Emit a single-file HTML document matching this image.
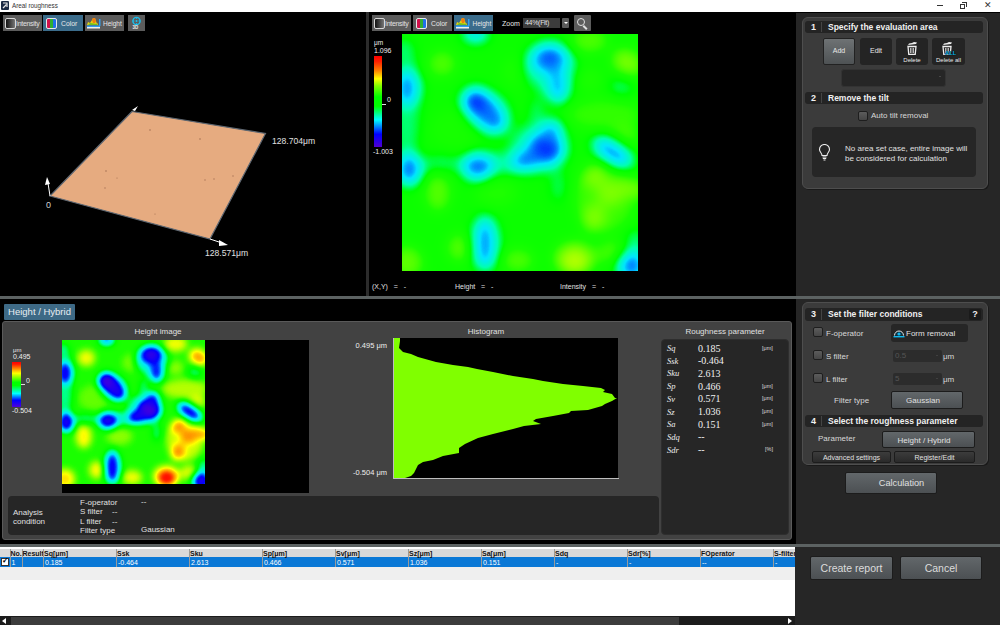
<!DOCTYPE html>
<html><head><meta charset="utf-8">
<style>
*{margin:0;padding:0;box-sizing:border-box}
html,body{width:1000px;height:625px;overflow:hidden;background:#000;font-family:"Liberation Sans",sans-serif;}
.a{position:absolute}
.t{position:absolute;white-space:nowrap;line-height:1}
</style></head><body>
<div class="a" style="left:0;top:0;width:1000px;height:625px;overflow:hidden;background:#000">

<!-- title bar -->
<div class="a" style="left:0;top:0;width:1000px;height:12px;background:#fff"></div>
<svg class="a" style="left:1px;top:1px" width="8" height="9" viewBox="0 0 8 9"><rect x="0" y="0" width="8" height="9" rx="1" fill="#1c2a44"/><path d="M2,2 H6 V6" stroke="#e8e8e8" stroke-width="1.2" fill="none"/><path d="M2,7 L5.5,3.5" stroke="#e8e8e8" stroke-width="1.2"/></svg>
<div class="t" style="left:12px;top:3px;font-size:6.3px;color:#333">Areal roughness</div>
<div class="a" style="left:937px;top:5px;width:6px;height:1px;background:#333"></div>
<div class="a" style="left:960px;top:4px;width:5px;height:5px;border:1px solid #333"></div><div class="a" style="left:962px;top:2px;width:5px;height:5px;border-top:1px solid #333;border-right:1px solid #333"></div>
<div class="t" style="left:984px;top:1px;font-size:9px;color:#333">&#x2715;</div>

<!-- TOP AREA -->
<!--MMAP_S--><svg class="a" style="left:402px;top:34px" width="236" height="237" viewBox="0 0 1000 1000" preserveAspectRatio="none"><defs><filter id="fm" filterUnits="userSpaceOnUse" x="-300" y="-300" width="1600" height="1600" color-interpolation-filters="sRGB"><feGaussianBlur stdDeviation="26"/><feComponentTransfer><feFuncR type="table" tableValues="0 0 0 0 0 0 0 0 0 0 0 0 0 0 0 0 0 0 0 0 0 0 0 0 0 0 0 0 0 0 0 0.0112 0.0245 0.0378 0.0507 0.0589 0.0671 0.0753 0.0835 0.0917 0.0999 0.126 0.153 0.18 0.207 0.234 0.261 0.288 0.314 0.341 0.368 0.395 0.422 0.449 0.475 0.502 0.529 0.556 0.583 0.61 0.637 0.663 0.69 0.717 0.744"/><feFuncG type="table" tableValues="0.072 0.152 0.231 0.311 0.391 0.47 0.55 0.63 0.709 0.789 0.869 0.906 0.917 0.928 0.938 0.949 0.96 0.97 0.981 0.991 1 1 1 1 1 1 1 1 1 1 1 1 1 1 1 1 1 1 1 1 1 1 1 1 1 1 1 1 1 1 1 1 1 1 1 1 1 1 1 1 1 1 1 1 1"/><feFuncB type="table" tableValues="1 1 1 1 1 1 1 1 1 1 1 0.981 0.949 0.917 0.885 0.853 0.821 0.789 0.757 0.726 0.687 0.619 0.551 0.484 0.416 0.349 0.281 0.213 0.146 0.0781 0.0105 0 0 0 0 0 0 0 0 0 0 0 0 0 0 0 0 0 0 0 0 0 0 0 0 0 0 0 0 0 0 0 0 0 0"/></feComponentTransfer></filter></defs><g filter="url(#fm)"><rect x="-300" y="-300" width="1600" height="1600" fill="rgb(135,135,135)"/>
<ellipse cx="170" cy="125" rx="62" ry="58" fill="rgb(189,189,189)"/>
<ellipse cx="795" cy="27" rx="80" ry="55" fill="rgb(189,189,189)"/>
<ellipse cx="955" cy="120" rx="70" ry="55" transform="rotate(30 955 120)" fill="rgb(214,214,214)"/>
<ellipse cx="795" cy="193" rx="55" ry="50" fill="rgb(163,163,163)"/>
<ellipse cx="860" cy="340" rx="160" ry="70" fill="rgb(173,173,173)"/>
<ellipse cx="491" cy="157" rx="70" ry="60" fill="rgb(158,158,158)"/>
<ellipse cx="223" cy="402" rx="110" ry="90" fill="rgb(153,153,153)"/>
<ellipse cx="402" cy="670" rx="90" ry="60" fill="rgb(163,163,163)"/>
<ellipse cx="152" cy="670" rx="55" ry="80" fill="rgb(194,194,194)"/>
<ellipse cx="20" cy="965" rx="70" ry="70" fill="rgb(199,199,199)"/>
<ellipse cx="241" cy="902" rx="50" ry="60" fill="rgb(194,194,194)"/>
<ellipse cx="491" cy="955" rx="70" ry="50" fill="rgb(189,189,189)"/>
<ellipse cx="884" cy="920" rx="60" ry="50" fill="rgb(184,184,184)"/>
<ellipse cx="945" cy="426" rx="60" ry="45" fill="rgb(184,184,184)"/>
<ellipse cx="860" cy="690" rx="130" ry="150" fill="rgb(178,178,178)"/>
<ellipse cx="812" cy="598" rx="55" ry="45" transform="rotate(-30 812 598)" fill="rgb(219,219,219)"/>
<ellipse cx="973" cy="652" rx="70" ry="40" transform="rotate(10 973 652)" fill="rgb(214,214,214)"/>
<ellipse cx="812" cy="777" rx="50" ry="60" transform="rotate(20 812 777)" fill="rgb(219,219,219)"/>
<ellipse cx="884" cy="670" rx="60" ry="55" fill="rgb(219,219,219)"/>
<ellipse cx="732" cy="946" rx="95" ry="75" fill="rgb(199,199,199)"/>
<ellipse cx="732" cy="960" rx="60" ry="55" fill="rgb(250,250,250)"/>
<ellipse cx="625" cy="140" rx="120" ry="110" fill="rgb(87,87,87)"/>
<ellipse cx="362" cy="330" rx="110" ry="90" transform="rotate(40 362 330)" fill="rgb(87,87,87)"/>
<ellipse cx="580" cy="480" rx="130" ry="110" fill="rgb(87,87,87)"/>
<ellipse cx="420" cy="545" rx="120" ry="50" fill="rgb(87,87,87)"/>
<ellipse cx="893" cy="500" rx="110" ry="60" transform="rotate(35 893 500)" fill="rgb(92,92,92)"/>
<ellipse cx="20" cy="300" rx="55" ry="260" fill="rgb(92,92,92)"/>
<ellipse cx="170" cy="545" rx="90" ry="35" fill="rgb(97,97,97)"/>
<ellipse cx="571" cy="342" rx="30" ry="80" fill="rgb(92,92,92)"/>
<ellipse cx="661" cy="640" rx="30" ry="70" fill="rgb(94,94,94)"/>
<ellipse cx="352" cy="880" rx="65" ry="130" fill="rgb(87,87,87)"/>
<ellipse cx="929" cy="223" rx="50" ry="45" fill="rgb(97,97,97)"/>
<ellipse cx="991" cy="884" rx="40" ry="60" fill="rgb(87,87,87)"/>
<ellipse cx="312" cy="0" rx="60" ry="40" fill="rgb(82,82,82)"/>
<ellipse cx="9" cy="62" rx="40" ry="40" fill="rgb(87,87,87)"/>
<ellipse cx="625" cy="107" rx="85" ry="70" fill="rgb(26,26,26)"/>
<ellipse cx="661" cy="225" rx="50" ry="70" fill="rgb(31,31,31)"/>
<ellipse cx="359" cy="329" rx="110" ry="62" transform="rotate(48 359 329)" fill="rgb(20,20,20)"/>
<ellipse cx="312" cy="286" rx="65" ry="65" fill="rgb(13,13,13)"/>
<ellipse cx="607" cy="482" rx="82" ry="75" fill="rgb(10,10,10)"/>
<ellipse cx="634" cy="410" rx="50" ry="50" fill="rgb(26,26,26)"/>
<ellipse cx="527" cy="532" rx="70" ry="50" transform="rotate(-15 527 532)" fill="rgb(20,20,20)"/>
<ellipse cx="321" cy="560" rx="72" ry="62" fill="rgb(20,20,20)"/>
<ellipse cx="893" cy="500" rx="90" ry="45" transform="rotate(35 893 500)" fill="rgb(26,26,26)"/>
<ellipse cx="22" cy="229" rx="58" ry="78" fill="rgb(26,26,26)"/>
<ellipse cx="30" cy="571" rx="58" ry="72" fill="rgb(20,20,20)"/>
<ellipse cx="352" cy="885" rx="48" ry="105" fill="rgb(26,26,26)"/>
<ellipse cx="973" cy="978" rx="65" ry="65" fill="rgb(20,20,20)"/>
<ellipse cx="312" cy="0" rx="50" ry="35" fill="rgb(36,36,36)"/>
<ellipse cx="625" cy="100" rx="30" ry="25" fill="rgb(0,0,0)"/>
<ellipse cx="312" cy="286" rx="28" ry="28" fill="rgb(0,0,0)"/>
<ellipse cx="607" cy="482" rx="32" ry="30" fill="rgb(0,0,0)"/></g></svg><!--MMAP_E-->
<!-- left toolbar -->
<div class="a" style="left:3px;top:15px;width:39px;height:16px;background:#5c5c5c"></div>
<div class="a" style="left:5px;top:18px;width:11px;height:11px;border:1px solid #d8d8d8;border-radius:2px;background:linear-gradient(90deg,#111,#777)"></div>
<div class="t" style="left:16px;top:20px;font-size:7px;color:#e0e0e0;letter-spacing:-0.3px">Intensity</div>
<div class="a" style="left:43px;top:15px;width:40px;height:16px;background:#3b6c8b"></div>
<div class="a" style="left:46px;top:18px;width:11px;height:11px;border:1px solid #e8e8e8;border-radius:2px;background:linear-gradient(90deg,#d0104a 0 33%,#30b030 33% 66%,#2070e8 66%)"></div>
<div class="t" style="left:61px;top:20.5px;font-size:6.8px;color:#e8e8e8">Color</div>
<div class="a" style="left:85px;top:15px;width:39px;height:16px;background:#5c5c5c"></div>
<svg class="a" style="left:87px;top:17px" width="14" height="12" viewBox="0 0 14 12"><path d="M0,8 L1,5 L3,6 L5,3 L6,1 L8,1 L9,4 L10,7 L11,6 L11,8 Z" fill="#e8d010"/><path d="M5,3 L6,1 L8,1 L9,4 L8,6 L6,6Z" fill="#f08010"/><path d="M1,8 L3,6 L10,7 L11,8Z" fill="#70c020"/><rect x="12" y="2" width="1.5" height="7" fill="#30a0f0"/><rect x="0" y="8.5" width="13" height="1.5" fill="#30a0f0"/><rect x="0" y="10" width="13" height="1.5" fill="#f0f0f0"/></svg>
<div class="t" style="left:103px;top:20.5px;font-size:6.5px;color:#e8e8e8">Height</div>
<div class="a" style="left:128px;top:15px;width:17px;height:16px;background:#5c5c5c"></div>
<svg class="a" style="left:131px;top:16px" width="11" height="15" viewBox="0 0 11 15"><circle cx="5.5" cy="5" r="3.6" fill="none" stroke="#18c0f0" stroke-width="1.4"/><circle cx="5.5" cy="5" r="1" fill="#18c0f0"/><path d="M5.5,1 V3 M5.5,7 V9 M1.5,5 H3.5 M7.5,5 H9.5" stroke="#18c0f0" stroke-width="0.8"/></svg>
<div class="t" style="left:132.5px;top:25.5px;font-size:4.5px;font-weight:bold;color:#eee">3D</div>

<!-- 3D plane -->
<svg class="a" style="left:0;top:12px" width="366" height="284" viewBox="0 12 366 284">
<polygon points="132,111.5 265.5,133.5 210,239 50,196" fill="#e6ab80" stroke="#5f6872" stroke-width="1.2"/>
<g fill="#8a5a40" opacity="0.7"><circle cx="150" cy="130" r="0.8"/><circle cx="200" cy="139" r="0.8"/><circle cx="106" cy="171" r="0.8"/><circle cx="117" cy="178" r="0.6"/><circle cx="233" cy="176" r="0.7"/><circle cx="205" cy="180" r="0.7"/><circle cx="214" cy="179" r="0.7"/><circle cx="105" cy="188" r="0.7"/><circle cx="155" cy="214" r="0.6"/></g>
<path d="M50,196 L48,183" stroke="#fff" stroke-width="1"/><polygon points="45,185 47,177 50,184" fill="#fff"/>
<path d="M210,239 L222,243" stroke="#fff" stroke-width="1"/><polygon points="219,240 228,245 219,246" fill="#fff"/>
<polygon points="132,110 138,106 135,111" fill="#fff"/>
</svg>
<div class="t" style="left:272px;top:137px;font-size:8.6px;color:#e0e0e0">128.704μm</div>
<div class="t" style="left:46px;top:201px;font-size:9px;color:#d0d0d0">0</div>
<div class="t" style="left:205px;top:248.5px;font-size:8.6px;color:#e0e0e0">128.571μm</div>

<!-- middle toolbar -->
<div class="a" style="left:372px;top:15px;width:39px;height:16px;background:#5c5c5c"></div>
<div class="a" style="left:374px;top:18px;width:11px;height:11px;border:1px solid #d8d8d8;border-radius:2px;background:linear-gradient(90deg,#111,#777)"></div>
<div class="t" style="left:385px;top:20px;font-size:7px;color:#e0e0e0;letter-spacing:-0.3px">Intensity</div>
<div class="a" style="left:413px;top:15px;width:39px;height:16px;background:#5c5c5c"></div>
<div class="a" style="left:416px;top:18px;width:11px;height:11px;border:1px solid #e8e8e8;border-radius:2px;background:linear-gradient(90deg,#d0104a 0 33%,#30b030 33% 66%,#2070e8 66%)"></div>
<div class="t" style="left:431px;top:20.5px;font-size:6.8px;color:#e8e8e8">Color</div>
<div class="a" style="left:454px;top:15px;width:39px;height:16px;background:#3b6c8b"></div>
<svg class="a" style="left:456px;top:17px" width="14" height="12" viewBox="0 0 14 12"><path d="M0,8 L1,5 L3,6 L5,3 L6,1 L8,1 L9,4 L10,7 L11,6 L11,8 Z" fill="#e8d010"/><path d="M5,3 L6,1 L8,1 L9,4 L8,6 L6,6Z" fill="#f08010"/><path d="M1,8 L3,6 L10,7 L11,8Z" fill="#70c020"/><rect x="12" y="2" width="1.5" height="7" fill="#30a0f0"/><rect x="0" y="8.5" width="13" height="1.5" fill="#30a0f0"/><rect x="0" y="10" width="13" height="1.5" fill="#f0f0f0"/></svg>
<div class="t" style="left:472.5px;top:20.5px;font-size:6.5px;color:#e8e8e8">Height</div>
<div class="t" style="left:502px;top:19.5px;font-size:7px;color:#e8e8e8">Zoom</div>
<div class="a" style="left:523px;top:18px;width:37px;height:10px;background:#3c3c3c"></div>
<div class="t" style="left:525px;top:19px;font-size:7px;color:#e0e0e0;letter-spacing:-0.3px">44%(Fit)</div>
<div class="a" style="left:562px;top:18px;width:7px;height:10px;background:#5a5a5a;border-radius:1px"></div>
<div class="a" style="left:563.5px;top:22px;width:0;height:0;border-left:2px solid transparent;border-right:2px solid transparent;border-top:2.5px solid #fff"></div>
<div class="a" style="left:574px;top:15px;width:17px;height:16px;background:#5c5c5c;border-radius:1px"></div>
<div class="a" style="left:577px;top:18px;width:8px;height:8px;border:1.5px solid #e0e0e0;border-radius:50%"></div>
<div class="a" style="left:584px;top:25px;width:5px;height:1.6px;background:#e0e0e0;transform:rotate(45deg);transform-origin:0 0"></div>
<!-- middle colorbar -->
<div class="t" style="left:374px;top:40px;font-size:6.5px;color:#eee">μm</div>
<div class="t" style="left:374px;top:47px;font-size:7px;color:#eee">1.096</div>
<div class="a" style="left:374px;top:56px;width:8px;height:91px;background:linear-gradient(#ff0000 0%,#ff2000 6%,#ff8000 16%,#ffff00 25%,#80ff00 33%,#00ff00 45%,#00ff00 55%,#00ffff 70%,#0080ff 78%,#0000ff 86%,#5000d0 100%)"></div>
<div class="a" style="left:382px;top:104px;width:4px;height:1px;background:#ddd"></div>
<div class="t" style="left:387px;top:96px;font-size:7px;color:#eee">0</div>
<div class="t" style="left:373px;top:148px;font-size:7px;color:#eee">-1.003</div>
<!-- status -->
<div class="t" style="left:372px;top:282.8px;font-size:7px;color:#e0e0e0;word-spacing:1px">(X,Y)&nbsp; = &nbsp;-</div>
<div class="t" style="left:455px;top:282.8px;font-size:7px;color:#e0e0e0;word-spacing:1px">Height&nbsp; = &nbsp;-</div>
<div class="t" style="left:560px;top:282.8px;font-size:7px;color:#e0e0e0;word-spacing:1px">Intensity&nbsp; = &nbsp;-</div>
<!-- BOTTOM AREA -->
<div class="a" style="left:4px;top:304px;width:71px;height:16px;background:#3e6a86;border-radius:1px"></div>
<div class="t" style="left:4px;top:307px;width:71px;text-align:center;font-size:9.5px;color:#e8eef2">Height / Hybrid</div>
<div class="a" style="left:2px;top:321px;width:790px;height:219px;background:#424242;border:1px solid #5a5a5a;border-radius:3px"></div>
<div class="t" style="left:108px;top:328px;width:100px;text-align:center;font-size:8px;color:#e0e0e0">Height image</div>
<div class="t" style="left:436px;top:328px;width:100px;text-align:center;font-size:8px;color:#e0e0e0">Histogram</div>
<div class="t" style="left:665px;top:328px;width:120px;text-align:center;font-size:8px;color:#e0e0e0">Roughness parameter</div>
<!-- bottom colorbar -->
<div class="t" style="left:13px;top:347px;font-size:6px;color:#eee">μm</div>
<div class="t" style="left:13px;top:353px;font-size:7px;color:#eee">0.495</div>
<div class="a" style="left:12px;top:362px;width:9px;height:45px;background:linear-gradient(#ff0000 0%,#ff1a00 5%,#ff8c00 15%,#ffff00 25%,#00ff00 45%,#00ff00 52%,#00ffff 70%,#0000ff 85%,#4d00d9 100%)"></div>
<div class="a" style="left:21px;top:384px;width:4px;height:1px;background:#ddd"></div>
<div class="t" style="left:26px;top:377px;font-size:7px;color:#eee">0</div>
<div class="t" style="left:12px;top:407px;font-size:7px;color:#eee">-0.504</div>
<!-- height image black box -->
<div class="a" style="left:62px;top:340px;width:247px;height:153px;background:#000"></div>
<!--HMAP_S--><svg class="a" style="left:62px;top:340px" width="143" height="144" viewBox="0 0 1000 1000" preserveAspectRatio="none"><defs><filter id="fb" filterUnits="userSpaceOnUse" x="-300" y="-300" width="1600" height="1600" color-interpolation-filters="sRGB"><feGaussianBlur stdDeviation="26"/><feComponentTransfer><feFuncR type="table" tableValues="0.3 0.261 0.222 0.183 0.144 0.105 0.0656 0.0266 0 0 0 0 0 0 0 0 0 0 0 0 0 0 0 0 0 0 0 0 0 0.00391 0.0234 0.043 0.0625 0.082 0.105 0.169 0.233 0.297 0.361 0.425 0.489 0.553 0.616 0.68 0.744 0.808 0.872 0.936 1 1 1 1 1 1 1 1 1 1 1 1 1 1 1 1 1"/><feFuncG type="table" tableValues="0 0 0 0 0 0 0 0 0.0375 0.155 0.272 0.389 0.506 0.623 0.741 0.858 0.91 0.926 0.941 0.957 0.973 0.988 1 1 1 1 1 1 1 1 1 1 1 1 1 1 1 1 1 1 1 1 1 1 1 1 1 1 1 0.936 0.872 0.808 0.744 0.68 0.616 0.553 0.475 0.397 0.319 0.241 0.162 0.0937 0.0625 0.0312 0"/><feFuncB type="table" tableValues="0.85 0.87 0.889 0.909 0.928 0.948 0.967 0.987 1 1 1 1 1 1 1 1 0.97 0.923 0.876 0.829 0.782 0.736 0.676 0.577 0.477 0.378 0.278 0.179 0.0795 0 0 0 0 0 0 0 0 0 0 0 0 0 0 0 0 0 0 0 0 0 0 0 0 0 0 0 0 0 0 0 0 0 0 0 0"/></feComponentTransfer></filter></defs><g filter="url(#fb)"><rect x="-300" y="-300" width="1600" height="1600" fill="rgb(135,135,135)"/>
<ellipse cx="170" cy="125" rx="62" ry="58" fill="rgb(189,189,189)"/>
<ellipse cx="795" cy="27" rx="80" ry="55" fill="rgb(189,189,189)"/>
<ellipse cx="955" cy="120" rx="70" ry="55" transform="rotate(30 955 120)" fill="rgb(214,214,214)"/>
<ellipse cx="795" cy="193" rx="55" ry="50" fill="rgb(163,163,163)"/>
<ellipse cx="860" cy="340" rx="160" ry="70" fill="rgb(173,173,173)"/>
<ellipse cx="491" cy="157" rx="70" ry="60" fill="rgb(158,158,158)"/>
<ellipse cx="223" cy="402" rx="110" ry="90" fill="rgb(153,153,153)"/>
<ellipse cx="402" cy="670" rx="90" ry="60" fill="rgb(163,163,163)"/>
<ellipse cx="152" cy="670" rx="55" ry="80" fill="rgb(194,194,194)"/>
<ellipse cx="20" cy="965" rx="70" ry="70" fill="rgb(199,199,199)"/>
<ellipse cx="241" cy="902" rx="50" ry="60" fill="rgb(194,194,194)"/>
<ellipse cx="491" cy="955" rx="70" ry="50" fill="rgb(189,189,189)"/>
<ellipse cx="884" cy="920" rx="60" ry="50" fill="rgb(184,184,184)"/>
<ellipse cx="945" cy="426" rx="60" ry="45" fill="rgb(184,184,184)"/>
<ellipse cx="860" cy="690" rx="130" ry="150" fill="rgb(178,178,178)"/>
<ellipse cx="812" cy="598" rx="55" ry="45" transform="rotate(-30 812 598)" fill="rgb(219,219,219)"/>
<ellipse cx="973" cy="652" rx="70" ry="40" transform="rotate(10 973 652)" fill="rgb(214,214,214)"/>
<ellipse cx="812" cy="777" rx="50" ry="60" transform="rotate(20 812 777)" fill="rgb(219,219,219)"/>
<ellipse cx="884" cy="670" rx="60" ry="55" fill="rgb(219,219,219)"/>
<ellipse cx="732" cy="946" rx="95" ry="75" fill="rgb(199,199,199)"/>
<ellipse cx="732" cy="960" rx="60" ry="55" fill="rgb(250,250,250)"/>
<ellipse cx="625" cy="140" rx="120" ry="110" fill="rgb(87,87,87)"/>
<ellipse cx="362" cy="330" rx="110" ry="90" transform="rotate(40 362 330)" fill="rgb(87,87,87)"/>
<ellipse cx="580" cy="480" rx="130" ry="110" fill="rgb(87,87,87)"/>
<ellipse cx="420" cy="545" rx="120" ry="50" fill="rgb(87,87,87)"/>
<ellipse cx="893" cy="500" rx="110" ry="60" transform="rotate(35 893 500)" fill="rgb(92,92,92)"/>
<ellipse cx="20" cy="300" rx="55" ry="260" fill="rgb(92,92,92)"/>
<ellipse cx="170" cy="545" rx="90" ry="35" fill="rgb(97,97,97)"/>
<ellipse cx="571" cy="342" rx="30" ry="80" fill="rgb(92,92,92)"/>
<ellipse cx="661" cy="640" rx="30" ry="70" fill="rgb(94,94,94)"/>
<ellipse cx="352" cy="880" rx="65" ry="130" fill="rgb(87,87,87)"/>
<ellipse cx="929" cy="223" rx="50" ry="45" fill="rgb(97,97,97)"/>
<ellipse cx="991" cy="884" rx="40" ry="60" fill="rgb(87,87,87)"/>
<ellipse cx="312" cy="0" rx="60" ry="40" fill="rgb(82,82,82)"/>
<ellipse cx="9" cy="62" rx="40" ry="40" fill="rgb(87,87,87)"/>
<ellipse cx="625" cy="107" rx="85" ry="70" fill="rgb(26,26,26)"/>
<ellipse cx="661" cy="225" rx="50" ry="70" fill="rgb(31,31,31)"/>
<ellipse cx="359" cy="329" rx="110" ry="62" transform="rotate(48 359 329)" fill="rgb(20,20,20)"/>
<ellipse cx="312" cy="286" rx="65" ry="65" fill="rgb(13,13,13)"/>
<ellipse cx="607" cy="482" rx="82" ry="75" fill="rgb(10,10,10)"/>
<ellipse cx="634" cy="410" rx="50" ry="50" fill="rgb(26,26,26)"/>
<ellipse cx="527" cy="532" rx="70" ry="50" transform="rotate(-15 527 532)" fill="rgb(20,20,20)"/>
<ellipse cx="321" cy="560" rx="72" ry="62" fill="rgb(20,20,20)"/>
<ellipse cx="893" cy="500" rx="90" ry="45" transform="rotate(35 893 500)" fill="rgb(26,26,26)"/>
<ellipse cx="22" cy="229" rx="58" ry="78" fill="rgb(26,26,26)"/>
<ellipse cx="30" cy="571" rx="58" ry="72" fill="rgb(20,20,20)"/>
<ellipse cx="352" cy="885" rx="48" ry="105" fill="rgb(26,26,26)"/>
<ellipse cx="973" cy="978" rx="65" ry="65" fill="rgb(20,20,20)"/>
<ellipse cx="312" cy="0" rx="50" ry="35" fill="rgb(36,36,36)"/>
<ellipse cx="625" cy="100" rx="30" ry="25" fill="rgb(0,0,0)"/>
<ellipse cx="312" cy="286" rx="28" ry="28" fill="rgb(0,0,0)"/>
<ellipse cx="607" cy="482" rx="32" ry="30" fill="rgb(0,0,0)"/></g></svg><!--HMAP_E-->
<!-- histogram -->
<div class="t" style="left:330px;top:342px;width:57px;text-align:right;font-size:7.5px;color:#eee">0.495 μm</div>
<div class="t" style="left:330px;top:469px;width:57px;text-align:right;font-size:7.5px;color:#eee">-0.504 μm</div>
<div class="a" style="left:393px;top:338px;width:225px;height:141px;background:#000"></div>
<svg class="a" style="left:393px;top:338px" width="226" height="141" viewBox="0 0 226 141">
<polygon fill="#80ff00" points="0,0 7,0 7,3 6,10 10,14 18,16 25,19 43,24 60,27 75,29 84,31 100,34 120,38 140,41 150,43 170,46 190,48 208,50 212,52 210,54 219,56 222,60 224,60 219,63 212,66 209,68 195,72 178,73 176,75 160,78 143,81 140,83 148,86 131,88 120,91 100,96 85,100 72,106 66,110 66,115 50,118 40,122 30,124 25,127 21,135 18,138 12,140 0,141"/>
<rect x="0" y="0" width="1" height="141" fill="#bdbdbd"/>
<rect x="0" y="140" width="226" height="1" fill="#bdbdbd"/>
</svg>
<!-- roughness params -->
<div class="a" style="left:661px;top:339px;width:128px;height:196px;background:#262626;border:1px solid #2e2e2e;border-radius:4px"></div>
<!--RP_S--><div class="t" style="left:667px;top:344.0px;font-family:'Liberation Serif',serif;font-style:italic;font-size:8.5px;color:#eee">Sq</div>
<div class="t" style="left:698px;top:343.5px;font-family:'Liberation Serif',serif;font-size:10px;color:#f0f0f0">0.185</div>
<div class="t" style="left:762px;top:345.5px;font-size:5.5px;color:#ddd">[μm]</div>
<div class="t" style="left:667px;top:356.7px;font-family:'Liberation Serif',serif;font-style:italic;font-size:8.5px;color:#eee">Ssk</div>
<div class="t" style="left:698px;top:356.2px;font-family:'Liberation Serif',serif;font-size:10px;color:#f0f0f0">-0.464</div>
<div class="t" style="left:667px;top:369.4px;font-family:'Liberation Serif',serif;font-style:italic;font-size:8.5px;color:#eee">Sku</div>
<div class="t" style="left:698px;top:368.9px;font-family:'Liberation Serif',serif;font-size:10px;color:#f0f0f0">2.613</div>
<div class="t" style="left:667px;top:382.1px;font-family:'Liberation Serif',serif;font-style:italic;font-size:8.5px;color:#eee">Sp</div>
<div class="t" style="left:698px;top:381.6px;font-family:'Liberation Serif',serif;font-size:10px;color:#f0f0f0">0.466</div>
<div class="t" style="left:762px;top:383.6px;font-size:5.5px;color:#ddd">[μm]</div>
<div class="t" style="left:667px;top:394.8px;font-family:'Liberation Serif',serif;font-style:italic;font-size:8.5px;color:#eee">Sv</div>
<div class="t" style="left:698px;top:394.3px;font-family:'Liberation Serif',serif;font-size:10px;color:#f0f0f0">0.571</div>
<div class="t" style="left:762px;top:396.3px;font-size:5.5px;color:#ddd">[μm]</div>
<div class="t" style="left:667px;top:407.5px;font-family:'Liberation Serif',serif;font-style:italic;font-size:8.5px;color:#eee">Sz</div>
<div class="t" style="left:698px;top:407.0px;font-family:'Liberation Serif',serif;font-size:10px;color:#f0f0f0">1.036</div>
<div class="t" style="left:762px;top:409.0px;font-size:5.5px;color:#ddd">[μm]</div>
<div class="t" style="left:667px;top:420.2px;font-family:'Liberation Serif',serif;font-style:italic;font-size:8.5px;color:#eee">Sa</div>
<div class="t" style="left:698px;top:419.7px;font-family:'Liberation Serif',serif;font-size:10px;color:#f0f0f0">0.151</div>
<div class="t" style="left:762px;top:421.7px;font-size:5.5px;color:#ddd">[μm]</div>
<div class="t" style="left:667px;top:432.9px;font-family:'Liberation Serif',serif;font-style:italic;font-size:8.5px;color:#eee">Sdq</div>
<div class="t" style="left:698px;top:432.4px;font-family:'Liberation Serif',serif;font-size:10px;color:#f0f0f0">--</div>
<div class="t" style="left:667px;top:445.6px;font-family:'Liberation Serif',serif;font-style:italic;font-size:8.5px;color:#eee">Sdr</div>
<div class="t" style="left:698px;top:445.1px;font-family:'Liberation Serif',serif;font-size:10px;color:#f0f0f0">--</div>
<div class="t" style="left:765px;top:447.1px;font-size:5.5px;color:#ddd">[%]</div><!--RP_E-->
<!-- analysis condition -->
<div class="a" style="left:8px;top:496px;width:651px;height:39px;background:#262626;border-radius:4px"></div>
<div class="t" style="left:13px;top:507.5px;font-size:8px;color:#e0e0e0;line-height:9.4px">Analysis<br>condition</div>
<div class="t" style="left:80px;top:498px;font-size:8px;color:#e0e0e0;line-height:9.4px">F-operator<br>S filter<br>L filter<br>Filter type</div>
<div class="t" style="left:141px;top:498px;font-size:8px;color:#e0e0e0">--</div>
<div class="t" style="left:112px;top:507.4px;font-size:8px;color:#e0e0e0;line-height:9.4px">--<br>--</div>
<div class="t" style="left:141px;top:526.2px;font-size:8px;color:#e0e0e0">Gaussian</div>
<!-- RIGHT PANEL -->
<div class="a" style="left:796px;top:13px;width:204px;height:284px;background:#262626"></div>
<div class="a" style="left:796px;top:299px;width:204px;height:245px;background:#262626"></div>
<!-- separators -->
<div class="a" style="left:0;top:296px;width:1000px;height:3px;background:#5c6262"></div>
<div class="a" style="left:0;top:544px;width:1000px;height:3px;background:#5c6262"></div>
<div class="a" style="left:366px;top:12px;width:3px;height:284px;background:#2c2c2c"></div>

<!-- card 1 -->
<div class="a" style="left:802px;top:17px;width:186px;height:172px;background:#3b3b3b;border:1px solid #4e4e4e;border-radius:6px;box-shadow:1px 1px 0 #1a1a1a"></div>
<div class="a" style="left:805px;top:21px;width:178px;height:12px;background:#242424;border-radius:3px"></div>
<div class="t" style="left:811px;top:23px;font-size:9px;font-weight:bold;color:#f0f0f0">1</div>
<div class="a" style="left:821px;top:22px;width:1px;height:10px;background:#444"></div>
<div class="t" style="left:828px;top:23px;font-size:8.5px;font-weight:bold;color:#f0f0f0">Specify the evaluation area</div>
<div class="a" style="left:823px;top:38px;width:32px;height:27px;background:linear-gradient(#6e7274,#4e5254);border:1px solid #222;border-radius:2px"></div>
<div class="t" style="left:823px;top:47px;width:32px;text-align:center;font-size:7px;color:#e8e8e8">Add</div>
<div class="a" style="left:860px;top:38px;width:32px;height:27px;background:#242424;border-radius:3px"></div>
<div class="t" style="left:860px;top:47px;width:32px;text-align:center;font-size:7px;color:#e8e8e8">Edit</div>
<div class="a" style="left:896px;top:38px;width:32px;height:27px;background:#242424;border-radius:3px"></div>
<div class="t" style="left:896px;top:56.5px;width:32px;text-align:center;font-size:6px;color:#e8e8e8">Delete</div>
<svg class="a" style="left:906px;top:41px" width="13" height="14" viewBox="0 0 13 14"><path d="M1.5,5 L2,4 L10,3 L11,1.5 L8,1 L6,2 L3,2.5Z" fill="#eee"/><path d="M2,5.5 L10,5.5 L9.2,13.5 L2.8,13.5Z" fill="none" stroke="#eee" stroke-width="1.3"/><path d="M4.5,7 V12 M6,7 V12 M7.5,7 V12" stroke="#ddd" stroke-width="0.8"/></svg>
<div class="a" style="left:932px;top:38px;width:33px;height:27px;background:#242424;border-radius:3px"></div>
<div class="t" style="left:932px;top:56.5px;width:33px;text-align:center;font-size:6px;color:#e8e8e8">Delete all</div>
<svg class="a" style="left:941px;top:41px" width="13" height="14" viewBox="0 0 13 14"><path d="M1.5,5 L2,4 L10,3 L11,1.5 L8,1 L6,2 L3,2.5Z" fill="#eee"/><path d="M2,5.5 L10,5.5 L9.2,13.5 L2.8,13.5Z" fill="none" stroke="#eee" stroke-width="1.3"/><path d="M4.5,7 V12 M6,7 V12 M7.5,7 V12" stroke="#ddd" stroke-width="0.8"/></svg>
<div class="t" style="left:945px;top:50.5px;font-size:5.8px;font-weight:bold;color:#10b8f0;text-shadow:0 0 1px #000,0 0 1px #000">ALL</div>
<div class="a" style="left:841px;top:69px;width:105px;height:18px;background:#262626;border-radius:3px;border:1px solid #333"></div>
<div class="a" style="left:805px;top:92px;width:178px;height:12px;background:#242424;border-radius:3px"></div>
<div class="t" style="left:811px;top:94px;font-size:9px;font-weight:bold;color:#f0f0f0">2</div>
<div class="a" style="left:821px;top:93px;width:1px;height:10px;background:#444"></div>
<div class="t" style="left:828px;top:94px;font-size:8.5px;font-weight:bold;color:#f0f0f0">Remove the tilt</div>
<div class="a" style="left:858px;top:111px;width:10px;height:10px;background:linear-gradient(#5c5c5c,#464646);border:1px solid #1e1e1e;border-radius:2px"></div>
<div class="t" style="left:871px;top:112px;font-size:8px;color:#d8d8d8">Auto tilt removal</div>
<div class="a" style="left:812px;top:127px;width:164px;height:50px;background:#262626;border-radius:4px"></div>
<div class="t" style="left:845px;top:144px;font-size:8px;color:#e0e0e0;line-height:10px">No area set case, entire image will<br>be considered for calculation</div>


<div class="a" style="left:957px;top:399px;width:0;height:0;border-left:2px solid transparent;border-right:2px solid transparent;border-top:2px solid #fff"></div>
<div class="a" style="left:969px;top:438px;width:0;height:0;border-left:2px solid transparent;border-right:2px solid transparent;border-top:2px solid #fff"></div>
<div class="a" style="left:939px;top:76px;width:0;height:0;border-left:1.5px solid transparent;border-right:1.5px solid transparent;border-top:1.5px solid #666"></div>
<svg class="a" style="left:848px;top:474px" width="16" height="17" viewBox="0 0 16 17"><path d="M6,1.5 H15" stroke="#e0e0e0" stroke-width="1.2"/><path d="M6,1.5 V9" stroke="#e0e0e0" stroke-width="1.2"/><path d="M1.5,5.5 H4 M8,5.5 H12.5 V15 L10.5,13.5 L8.5,15 L6.5,13.5 L4.5,15 L1.5,13.5 Z" fill="none" stroke="#10b8f0" stroke-width="1.4"/></svg>
<svg class="a" style="left:818px;top:144px" width="13" height="17" viewBox="0 0 13 17"><path d="M4,11.5 C4,9 1.5,8 1.5,5.5 A5,5 0 0 1 11.5,5.5 C11.5,8 9,9 9,11.5 Z" fill="none" stroke="#eee" stroke-width="1.1"/><path d="M4.5,13 H8.5 M4.8,14.5 H8.2 M5.5,16 H7.5" stroke="#eee" stroke-width="1"/></svg>
<!-- card 2 -->
<div class="a" style="left:802px;top:302px;width:186px;height:163px;background:#3b3b3b;border:1px solid #4e4e4e;border-radius:6px;box-shadow:1px 1px 0 #1a1a1a"></div>
<div class="a" style="left:805px;top:308px;width:178px;height:13px;background:#242424;border-radius:3px"></div>
<div class="t" style="left:811px;top:310px;font-size:9px;font-weight:bold;color:#f0f0f0">3</div>
<div class="a" style="left:821px;top:309px;width:1px;height:11px;background:#444"></div>
<div class="t" style="left:828px;top:310px;font-size:8.5px;font-weight:bold;color:#f0f0f0">Set the filter conditions</div>
<div class="a" style="left:969px;top:309px;width:12px;height:11px;background:#1a1a1a;border-radius:2px"></div>
<div class="t" style="left:969px;top:310px;width:12px;text-align:center;font-size:9px;font-weight:bold;color:#f0f0f0">?</div>
<div class="a" style="left:813px;top:327px;width:10px;height:10px;background:linear-gradient(#5c5c5c,#464646);border:1px solid #1e1e1e;border-radius:2px"></div>
<div class="t" style="left:826px;top:329.5px;font-size:8px;color:#d8d8d8">F-operator</div>
<div class="a" style="left:891px;top:324px;width:77px;height:18px;background:#262626;border-radius:3px"></div>
<div class="t" style="left:906px;top:329.5px;font-size:8px;color:#e0e0e0">Form removal</div>
<svg class="a" style="left:893px;top:328px" width="12" height="10" viewBox="0 0 12 10"><path d="M1.5,7.5 A4.5,4.5 0 0 1 10.5,7.5" fill="#0a3040" stroke="#e8e8e8" stroke-width="1"/><circle cx="6" cy="6" r="1.6" fill="#10b8f0"/><rect x="0.5" y="8" width="11" height="1.4" fill="#10b8f0"/></svg>
<div class="a" style="left:813px;top:350px;width:10px;height:10px;background:linear-gradient(#5c5c5c,#464646);border:1px solid #1e1e1e;border-radius:2px"></div>
<div class="t" style="left:826px;top:353px;font-size:8px;color:#d8d8d8">S filter</div>
<div class="a" style="left:893px;top:350px;width:49px;height:12px;background:#2c2c2c;border-radius:2px"></div>
<div class="t" style="left:895px;top:352px;font-size:8px;color:#555">0.5</div>
<div class="t" style="left:943px;top:353px;font-size:8px;color:#d8d8d8">μm</div>
<div class="a" style="left:813px;top:373px;width:10px;height:10px;background:linear-gradient(#5c5c5c,#464646);border:1px solid #1e1e1e;border-radius:2px"></div>
<div class="t" style="left:826px;top:376px;font-size:8px;color:#d8d8d8">L filter</div>
<div class="a" style="left:893px;top:373px;width:49px;height:12px;background:#2c2c2c;border-radius:2px"></div>
<div class="t" style="left:895px;top:375px;font-size:8px;color:#555">5</div>
<div class="t" style="left:943px;top:376px;font-size:8px;color:#d8d8d8">μm</div>

<div class="a" style="left:936px;top:355px;width:0;height:0;border-left:1.5px solid transparent;border-right:1.5px solid transparent;border-top:1.5px solid #555"></div>
<div class="a" style="left:936px;top:378px;width:0;height:0;border-left:1.5px solid transparent;border-right:1.5px solid transparent;border-top:1.5px solid #555"></div>
<div class="t" style="left:834px;top:397px;font-size:8px;color:#d8d8d8">Filter type</div>
<div class="a" style="left:891px;top:391px;width:72px;height:18px;background:linear-gradient(#62676a,#4c5053);border:1px solid #1c1c1c;border-radius:2px"></div>
<div class="t" style="left:891px;top:397px;width:64px;text-align:center;font-size:8px;color:#e0e0e0">Gaussian</div>
<div class="a" style="left:805px;top:415px;width:178px;height:12px;background:#242424;border-radius:3px"></div>
<div class="t" style="left:811px;top:417px;font-size:9px;font-weight:bold;color:#f0f0f0">4</div>
<div class="a" style="left:821px;top:416px;width:1px;height:10px;background:#444"></div>
<div class="t" style="left:828px;top:417px;font-size:8.5px;font-weight:bold;color:#f0f0f0">Select the roughness parameter</div>
<div class="t" style="left:818px;top:434.5px;font-size:8px;color:#d8d8d8">Parameter</div>
<div class="a" style="left:882px;top:431px;width:93px;height:17px;background:linear-gradient(#62676a,#4c5053);border:1px solid #1c1c1c;border-radius:2px"></div>
<div class="t" style="left:882px;top:436.5px;width:84px;text-align:center;font-size:8px;color:#e0e0e0">Height / Hybrid</div>
<div class="a" style="left:812px;top:451px;width:79px;height:12px;background:linear-gradient(#3c3c3c,#2a2a2a);border:1px solid #1c1c1c;border-radius:2px"></div>
<div class="t" style="left:812px;top:454px;width:79px;text-align:center;font-size:7px;color:#e0e0e0">Advanced settings</div>
<div class="a" style="left:894px;top:451px;width:81px;height:12px;background:linear-gradient(#3c3c3c,#2a2a2a);border:1px solid #1c1c1c;border-radius:2px"></div>
<div class="t" style="left:894px;top:454px;width:81px;text-align:center;font-size:7px;color:#e0e0e0">Register/Edit</div>
<div class="a" style="left:845px;top:472px;width:92px;height:22px;background:linear-gradient(#62676a,#4c5053);border:1px solid #1c1c1c;border-radius:2px"></div>
<div class="t" style="left:866px;top:479px;width:71px;text-align:center;font-size:9.2px;color:#e0e0e0">Calculation</div>
<!-- TABLE -->
<div class="a" style="left:0;top:547px;width:795px;height:69px;background:#fff"></div>
<div class="a" style="left:0;top:549px;width:795px;height:8px;background:#d9d9d9"></div>
<div class="a" style="left:0;top:557px;width:795px;height:10px;background:#0a78d6"></div>
<div class="a" style="left:0;top:567px;width:795px;height:13px;background:#efefef"></div>
<!--TC_S--><div class="a" style="left:9.5px;top:549px;width:1px;height:18px;background:#9a9a9a"></div>
<div class="t" style="left:10.5px;top:550px;font-size:7px;font-weight:bold;color:#111">No.</div>
<div class="t" style="left:11.5px;top:558.5px;font-size:7px;color:#fff">1</div>
<div class="a" style="left:21.5px;top:549px;width:1px;height:18px;background:#9a9a9a"></div>
<div class="t" style="left:22.5px;top:550px;font-size:7px;font-weight:bold;color:#111">Result</div>
<div class="a" style="left:43.0px;top:549px;width:1px;height:18px;background:#9a9a9a"></div>
<div class="t" style="left:44.0px;top:550px;font-size:7px;font-weight:bold;color:#111">Sq[μm]</div>
<div class="t" style="left:45.0px;top:558.5px;font-size:7px;color:#fff">0.185</div>
<div class="a" style="left:116.0px;top:549px;width:1px;height:18px;background:#9a9a9a"></div>
<div class="t" style="left:117.0px;top:550px;font-size:7px;font-weight:bold;color:#111">Ssk</div>
<div class="t" style="left:118.0px;top:558.5px;font-size:7px;color:#fff">-0.464</div>
<div class="a" style="left:189.0px;top:549px;width:1px;height:18px;background:#9a9a9a"></div>
<div class="t" style="left:190.0px;top:550px;font-size:7px;font-weight:bold;color:#111">Sku</div>
<div class="t" style="left:191.0px;top:558.5px;font-size:7px;color:#fff">2.613</div>
<div class="a" style="left:262.0px;top:549px;width:1px;height:18px;background:#9a9a9a"></div>
<div class="t" style="left:263.0px;top:550px;font-size:7px;font-weight:bold;color:#111">Sp[μm]</div>
<div class="t" style="left:264.0px;top:558.5px;font-size:7px;color:#fff">0.466</div>
<div class="a" style="left:335.0px;top:549px;width:1px;height:18px;background:#9a9a9a"></div>
<div class="t" style="left:336.0px;top:550px;font-size:7px;font-weight:bold;color:#111">Sv[μm]</div>
<div class="t" style="left:337.0px;top:558.5px;font-size:7px;color:#fff">0.571</div>
<div class="a" style="left:408.0px;top:549px;width:1px;height:18px;background:#9a9a9a"></div>
<div class="t" style="left:409.0px;top:550px;font-size:7px;font-weight:bold;color:#111">Sz[μm]</div>
<div class="t" style="left:410.0px;top:558.5px;font-size:7px;color:#fff">1.036</div>
<div class="a" style="left:481.0px;top:549px;width:1px;height:18px;background:#9a9a9a"></div>
<div class="t" style="left:482.0px;top:550px;font-size:7px;font-weight:bold;color:#111">Sa[μm]</div>
<div class="t" style="left:483.0px;top:558.5px;font-size:7px;color:#fff">0.151</div>
<div class="a" style="left:554.0px;top:549px;width:1px;height:18px;background:#9a9a9a"></div>
<div class="t" style="left:555.0px;top:550px;font-size:7px;font-weight:bold;color:#111">Sdq</div>
<div class="t" style="left:556.0px;top:558.5px;font-size:7px;color:#fff">-</div>
<div class="a" style="left:627.0px;top:549px;width:1px;height:18px;background:#9a9a9a"></div>
<div class="t" style="left:628.0px;top:550px;font-size:7px;font-weight:bold;color:#111">Sdr[%]</div>
<div class="t" style="left:629.0px;top:558.5px;font-size:7px;color:#fff">-</div>
<div class="a" style="left:700.0px;top:549px;width:1px;height:18px;background:#9a9a9a"></div>
<div class="t" style="left:701.0px;top:550px;font-size:7px;font-weight:bold;color:#111">FOperator</div>
<div class="t" style="left:702.0px;top:558.5px;font-size:7px;color:#fff">--</div>
<div class="a" style="left:773.0px;top:549px;width:1px;height:18px;background:#9a9a9a"></div>
<div class="t" style="left:774.0px;top:550px;font-size:7px;font-weight:bold;color:#111">S-filter</div>
<div class="t" style="left:775.0px;top:558.5px;font-size:7px;color:#fff">-</div>
<div class="a" style="left:1px;top:558px;width:8px;height:8px;background:#fff;border:1px solid #333"></div>
<div class="t" style="left:1.5px;top:557px;font-size:8px;font-weight:bold;color:#000">&#x2713;</div><!--TC_E-->
<div class="a" style="left:0;top:616px;width:795px;height:9px;background:#1c1c1c"></div>
<div class="a" style="left:11px;top:617px;width:668px;height:8px;background:#3c3c3c"></div>
<div class="a" style="left:2px;top:618px;width:0;height:0;border-top:3px solid transparent;border-bottom:3px solid transparent;border-right:4px solid #fff"></div>
<div class="a" style="left:788px;top:618px;width:0;height:0;border-top:3px solid transparent;border-bottom:3px solid transparent;border-left:4px solid #fff"></div>
<div class="a" style="left:795px;top:547px;width:205px;height:78px;background:#262626"></div>
<div class="a" style="left:810px;top:556px;width:83px;height:24px;background:linear-gradient(#62676a,#4c5053);border:1px solid #1c1c1c;border-radius:2px"></div>
<div class="t" style="left:810px;top:563px;width:83px;text-align:center;font-size:10.5px;color:#dcdcdc">Create report</div>
<div class="a" style="left:900px;top:556px;width:82px;height:24px;background:linear-gradient(#62676a,#4c5053);border:1px solid #1c1c1c;border-radius:2px"></div>
<div class="t" style="left:900px;top:563px;width:82px;text-align:center;font-size:10.5px;color:#dcdcdc">Cancel</div>

</div>
</body></html>
